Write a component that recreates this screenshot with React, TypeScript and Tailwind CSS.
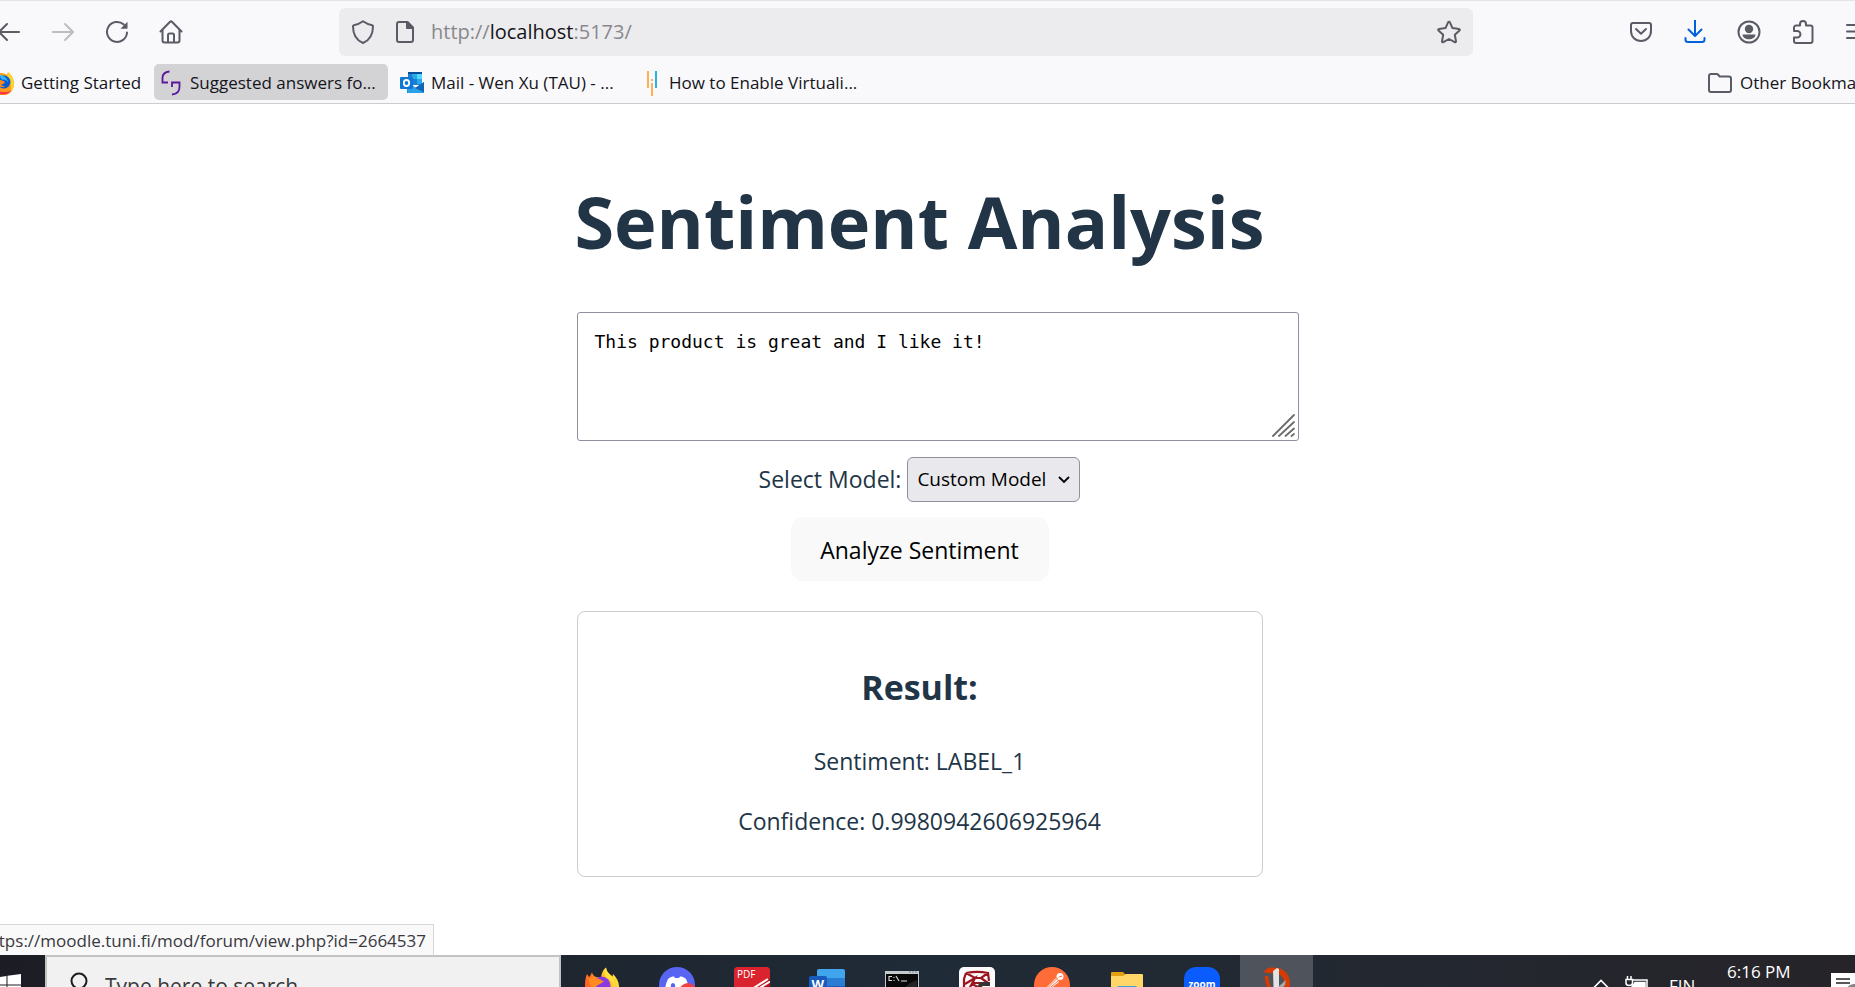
import { useState } from "react";

const UI = "font-['Open_Sans','Noto_Sans',sans-serif]";

function BackIcon() {
  return (
    <svg viewBox="0 0 24 24" className="h-6 w-6" fill="none" stroke="currentColor" strokeWidth="2" strokeLinecap="round" strokeLinejoin="round">
      <path d="M22 12H2M10 4l-8 8 8 8" />
    </svg>
  );
}

function ForwardIcon() {
  return (
    <svg viewBox="0 0 24 24" className="h-6 w-6" fill="none" stroke="currentColor" strokeWidth="2" strokeLinecap="round" strokeLinejoin="round">
      <path d="M2 12h20M14 4l8 8-8 8" />
    </svg>
  );
}

function ReloadIcon() {
  return (
    <svg viewBox="0 0 24 24" className="h-6 w-6" fill="none" stroke="currentColor" strokeWidth="2" strokeLinecap="round">
      <path d="M22 12.5A10 10 0 1 1 18.8 4.6" />
      <path d="M22.5 1.8v7h-7z" fill="currentColor" stroke="none" />
    </svg>
  );
}

function HomeIcon() {
  return (
    <svg viewBox="0 0 24 24" className="h-6 w-6" fill="none" stroke="currentColor" strokeWidth="2" strokeLinejoin="round" strokeLinecap="round">
      <path d="M1.5 11.5 10.8 2a1.7 1.7 0 0 1 2.4 0l9.3 9.5" />
      <path d="M3.5 10v10.5a2 2 0 0 0 2 2h13a2 2 0 0 0 2-2V10" />
      <path d="M9 22v-7a1.5 1.5 0 0 1 1.5-1.5h3A1.5 1.5 0 0 1 15 15v7" />
    </svg>
  );
}

function ShieldIcon() {
  return (
    <svg viewBox="0 0 24 26" className="h-[26px] w-6" fill="none" stroke="currentColor" strokeWidth="2" strokeLinejoin="round">
      <path d="M12 2.2c3.2 2.3 6 3.4 9.2 4 .6.1.8.4.8 1C22 15 19 21 12 24 5 21 2 15 2 7.2c0-.6.2-.9.8-1 3.2-.6 6-1.700 9.200-4z" />
    </svg>
  );
}

function PageIcon() {
  return (
    <svg viewBox="0 0 20 24" className="h-6 w-5" fill="none" stroke="currentColor" strokeWidth="2" strokeLinejoin="round">
      <path d="M12.5 2H4a2 2 0 0 0-2 2v16a2 2 0 0 0 2 2h12a2 2 0 0 0 2-2V7.5z" />
      <path d="M12 2v6h6z" fill="currentColor" />
    </svg>
  );
}

function StarIcon() {
  return (
    <svg viewBox="0 0 24 24" className="h-6 w-6" fill="none" stroke="currentColor" strokeWidth="2" strokeLinejoin="round">
      <path d="M11.2 2.2a.9.900 0 0 1 1.600 0l2.700 5.900 6.500.8c.8.100 1.100 1 .5 1.500l-4.700 4.400 1.200 6.500c.1.800-.6 1.300-1.300.9L12 19l-5.700 3.200c-.7.400-1.400-.1-1.300-.9l1.200-6.500L1.500 10.400C.9 9.900 1.200 9 2 8.900l6.500-.8z" />
    </svg>
  );
}

function PocketIcon() {
  return (
    <svg viewBox="0 0 24 24" className="h-6 w-6" fill="none" stroke="currentColor" strokeWidth="2" strokeLinejoin="round" strokeLinecap="round">
      <path d="M4 3h16a2 2 0 0 1 2 2v6c0 6-4.500 10-10 10S2 17 2 11V5a2 2 0 0 1 2-2z" />
      <path d="m7 9 5 4.800L17 9" />
    </svg>
  );
}

function DownloadIcon() {
  return (
    <svg viewBox="0 0 24 24" className="h-6 w-6" fill="none" stroke="currentColor" strokeWidth="2" strokeLinejoin="round" strokeLinecap="round">
      <path d="M12 0v15.500M5.500 9.500l6.500 6.500 6.500-6.500" />
      <path d="M2.500 18v1.500a2.500 2.500 0 0 0 2.500 2.500h14a2.500 2.500 0 0 0 2.500-2.500V18" />
    </svg>
  );
}

function AccountIcon() {
  return (
    <svg viewBox="0 0 24 24" className="h-6 w-6">
      <circle cx="12" cy="12" r="10.500" fill="none" stroke="currentColor" strokeWidth="2" />
      <circle cx="12" cy="9" r="4.200" fill="currentColor" />
      <path d="M5.500 14.500h13c0 3-3 4.800-6.500 4.800s-6.500-1.800-6.500-4.800z" fill="currentColor" />
    </svg>
  );
}

function PuzzleIcon() {
  return (
    <svg viewBox="0 0 24 26" className="h-[26px] w-6" fill="none" stroke="currentColor" strokeWidth="2" strokeLinejoin="round">
      <path d="M3 12V8.500a2 2 0 0 1 2-2h4V5a3 3 0 0 1 6 0v1.500h4.500a2 2 0 0 1 2 2V22a2 2 0 0 1-2 2H5a2 2 0 0 1-2-2v-3.500h3.200a3.200 3.200 0 0 0 0-6.500z" />
    </svg>
  );
}

function MenuIcon() {
  return (
    <svg viewBox="0 0 24 24" className="h-6 w-6" fill="none" stroke="currentColor" strokeWidth="2" strokeLinecap="round">
      <path d="M2 5h20M2 11.500h20M2 18h20" />
    </svg>
  );
}

function FirefoxLogo() {
  return (
    <svg viewBox="0 0 36 36" className="h-9 w-9">
      <defs>
        <linearGradient id="flame" x1="1" y1="0" x2="0" y2="0.600">
          <stop offset="0" stopColor="#fff44f" />
          <stop offset="0.400" stopColor="#ffc52f" />
          <stop offset="0.700" stopColor="#ff7a1f" />
          <stop offset="1" stopColor="#ff5a2c" />
        </linearGradient>
      </defs>
      <path d="M3 7c1 1.500 1.800 2.500 2.500 3L8 5.500c.6 2 2 3.500 4 4.500l5 .5c.5-4 2-8 5-10 .3 3 1.800 5 4 7l2.500 2 .5-2.500c3.500 3.500 6 8 6 12A17 17 0 0 1 1 19C1 14 1.500 10 3 7z" fill="url(#flame)" />
      <circle cx="17.500" cy="18.500" r="9" fill="#8a3be0" />
      <path d="M5 12c3-2 8-1.500 11 .5l4 2-5 3c-3 1.500-4 3-3 6-4-2-7-6-7-11.500z" fill="#ff8a1f" />
      <path d="M22 .5c.3 3 1.800 5 4 7 4 4 5 8 4 12-1-5-4-7-7-9s-3-7-1-10z" fill="#ffe23a" />
    </svg>
  );
}

function FirefoxBookmark() {
  return (
    <svg viewBox="0 0 24 24" className="h-6 w-6 shrink-0">
      <path d="M12 2c2 0 3 1 5 2l1-3c4 3 6 8 6 12a11.500 11.500 0 0 1-23 0C1 7 6 2 12 2z" fill="#ff9a1a" />
      <path d="M18 1c4 3 6 8 6 12 0 3-1 5-3 7 0-5 0-9-4-13z" fill="#ffd52b" />
      <path d="M1 14c0 6 5 9.500 11 9.500 4 0 7-1 9-4-6 3-14 2-20-5.500z" fill="#ff3647" />
      <circle cx="14" cy="11" r="6.500" fill="#0a5bd3" />
      <path d="M9 4c3 0 8 2 9 7-2-2-4-3-6-2z" fill="#32b8f5" />
      <path d="M6 10c3-2 7-1 9 1-1 2-3 2-4 3 1 1 3 1 4 1-2 2-7 2-9-5z" fill="#ff8a1a" />
    </svg>
  );
}

function ForumIcon() {
  return (
    <svg viewBox="0 0 22 26" className="h-[26px] w-[22px]" fill="none" stroke="#5b169c" strokeWidth="1.800">
      <path d="M9.500 1.500C5.500 1.800 2.500 4 2.500 8v4.500h5.500" />
      <path d="M12 17v-4.500h7.500V17c0 4-2.500 7-7.500 7.500" />
    </svg>
  );
}

function OutlookIcon() {
  return (
    <svg viewBox="0 0 24 24" className="h-6 w-6">
      <path d="M8 1h14v13H8z" fill="#1a7fd4" />
      <path d="M8 1h14v2H8z" fill="#0a4f9c" />
      <path d="M12 3h5v5h-5z" fill="#32a9e7" />
      <path d="M17 3h5v5h-5z" fill="#50d9ff" />
      <path d="M17 8h5v5h-5z" fill="#28a8ea" />
      <path d="M7 22V12l8.500 5L24 11v11z" fill="#1490df" />
      <path d="m7 11 17 11H8z" fill="#28a0ea" />
      <path d="m15 17 9-6v10z" fill="#1167b5" />
      <rect y="6" width="13" height="12" rx="1" fill="#0f78d4" />
      <ellipse cx="6.500" cy="12" rx="2.700" ry="3" fill="none" stroke="#fff" strokeWidth="1.800" />
    </svg>
  );
}

function ArticleIcon() {
  return (
    <svg viewBox="0 0 10 26" className="h-[26px] w-[10px]">
      <path d="M0 1h2v17H0z" fill="#fbb254" />
      <path d="M8 1h2v17H8z" fill="#28b3e6" />
      <path d="M4 9h2v2H4zM4 13h2v13H4z" fill="#fbb254" />
    </svg>
  );
}

function FolderOutline() {
  return (
    <svg viewBox="0 0 24 22" className="h-[22px] w-6" fill="none" stroke="currentColor" strokeWidth="2" strokeLinejoin="round">
      <path d="M3 2h5.500c1 0 1.300.3 1.900 1l1.300 1.500H21a2 2 0 0 1 2 2V18a2 2 0 0 1-2 2H3a2 2 0 0 1-2-2V4a2 2 0 0 1 2-2z" />
    </svg>
  );
}

function BrowserToolbar() {
  return (
    <div className="flex h-[62px] items-center overflow-hidden border-t border-[#e4e4e8] text-[#5b5b66]">
      <nav className="flex w-[339px] shrink-0 items-center gap-[30px]">
        <button aria-label="Back" className="-ml-[3px] flex w-6"><BackIcon /></button>
        <button aria-label="Forward" disabled className="flex text-[#bcbcc2]"><ForwardIcon /></button>
        <button aria-label="Reload" className="flex"><ReloadIcon /></button>
        <button aria-label="Home" className="flex"><HomeIcon /></button>
      </nav>
      <div className="flex h-12 flex-1 items-center rounded-[6px] bg-[#ececee] px-3">
        <ShieldIcon />
        <span className="ml-5"><PageIcon /></span>
        <a href="#" className="ml-4 flex-1 text-xl text-[#88888c]">
          http://<span className="text-[#15141a]">localhost</span>:5173/
        </a>
        <button aria-label="Bookmark this page"><StarIcon /></button>
      </div>
      <div className="flex w-[382px] shrink-0 items-center gap-[30px] pl-[156px]">
        <button aria-label="Save to Pocket"><PocketIcon /></button>
        <button aria-label="Downloads" className="text-[#0061e0]"><DownloadIcon /></button>
        <button aria-label="Account"><AccountIcon /></button>
        <button aria-label="Extensions"><PuzzleIcon /></button>
        <button aria-label="Menu" className="shrink-0"><MenuIcon /></button>
      </div>
    </div>
  );
}

function BookmarksBar() {
  const item = "flex h-9 shrink-0 items-center gap-2 whitespace-nowrap rounded-[5px] pt-px text-[#15141a]";
  return (
    <div className="flex h-[42px] items-start overflow-hidden border-b border-[#cccccf] pt-0.5 text-[17px]">
      <a href="#" className={`${item} -ml-2.5 w-[164px] gap-[7px]`}>
        <FirefoxBookmark />
        Getting Started
      </a>
      <a href="#" className={`${item} w-[234px] bg-[#d3d3d6] pl-1.5`}>
        <ForumIcon />
        Suggested answers fo...
      </a>
      <a href="#" className={`${item} w-[247px] gap-[7px] pl-3`}>
        <OutlookIcon />
        Mail - Wen Xu (TAU) - ...
      </a>
      <a href="#" className={`${item} gap-3 pl-3`}>
        <ArticleIcon />
        How to Enable Virtuali...
      </a>
      <div className="flex-1" />
      <a href="#" className={`${item} w-[147px] gap-1`}>
        <span className="shrink-0 text-[#5b5b66]"><FolderOutline /></span>
        Other Bookmarks
      </a>
    </div>
  );
}

function SentimentPage() {
  const [text, setText] = useState("This product is great and I like it!");
  const [model, setModel] = useState("Custom Model");
  return (
    <main className="relative flex min-h-0 flex-1 justify-center overflow-hidden bg-white pr-4 pt-[73px] text-[#213547]">
      <div className="flex w-[686px] flex-col items-center">
        <h1 className="text-[72px] leading-[88px] font-bold whitespace-nowrap">Sentiment Analysis</h1>
        <div className="relative mt-[47px] w-full">
          <textarea
            aria-label="Text to analyze"
            value={text}
            onChange={(e) => setText(e.target.value)}
            className="box-content block h-[93px] w-full resize-none rounded-[3px] border border-[#8f8f9d] bg-white p-[17px] font-['DejaVu_Sans_Mono','Liberation_Mono',monospace] text-[18px] leading-6 text-black outline-none"
          />
          <svg viewBox="0 0 24 24" className="absolute -right-8 bottom-1 h-6 w-6" stroke="#6c6c6c" strokeWidth="1.800" strokeLinecap="round">
            <path d="M2 23 23 2M8 23 23 9M14.500 23 23 15.500M20.500 23 23 21" />
          </svg>
        </div>
        <div className="mt-4 flex h-[45px] items-center gap-1.5 text-[23px]">
          <label htmlFor="model">Select Model:</label>
          <div className="relative h-full w-[173px]">
            <select
              id="model"
              value={model}
              onChange={(e) => setModel(e.target.value)}
              className="h-full w-full appearance-none rounded-[6px] border border-[#8f8f9d] bg-[#e9e9ed] pl-[9px] text-[19px] text-black outline-none"
            >
              <option>Custom Model</option>
            </select>
            <svg viewBox="0 0 12 8" className="pointer-events-none absolute top-[19px] right-2.5 h-2 w-3" fill="none" stroke="#000" strokeWidth="1.800">
              <path d="m1 1 5 5 5-5" />
            </svg>
          </div>
        </div>
        <button className="mt-[15px] h-16 w-[258px] rounded-[12px] bg-[#f9f9f9] pt-0.5 text-[23px] text-black">Analyze Sentiment</button>
        <section className="mt-[30px] flex h-[266px] w-full flex-col items-center rounded-lg border border-[#cccccc] pt-12 text-[23px]">
          <h2 className="text-[34px] leading-[54px] font-bold">Result:</h2>
          <p className="mt-[29px] leading-9">Sentiment: LABEL_1</p>
          <p className="mt-6 leading-9">Confidence: 0.9980942606925964</p>
        </section>
      </div>
      <div className="absolute bottom-0 left-0 flex h-[31px] w-[434px] items-center justify-end overflow-hidden border-t border-r border-[#d7d7db] bg-[#f9f9fa] pt-0.5 pr-[7px] text-[17px] whitespace-nowrap text-[#38383d]">
        https://moodle.tuni.fi/mod/forum/view.php?id=2664537
      </div>
    </main>
  );
}

function DiscordIcon() {
  return (
    <svg viewBox="0 0 36 36" className="h-9 w-9">
      <circle cx="18" cy="18" r="18" fill="#5865f2" />
      <path d="M9 12c3-2.500 5-2.500 6-2.500l1 1.500h4l1-1.500c1 0 3 0 6 2.500 2 4 3 8 3 12l-6 4-2-3h-8l-2 3-6-4c0-4 1-8 3-12z" fill="#fff" />
      <ellipse cx="14" cy="18.500" rx="2.200" ry="2.600" fill="#5865f2" />
      <circle cx="29" cy="25" r="9" fill="#ed4245" />
    </svg>
  );
}

function PdfIcon() {
  return (
    <svg viewBox="0 0 36 36" className="h-9 w-9">
      <rect width="36" height="36" rx="4" fill="#b5121b" />
      <path d="M4 0h28a4 4 0 0 1 4 4v7L0 30V4a4 4 0 0 1 4-4z" fill="#d9232e" />
      <path d="M18 22 34 12M24 22l12-7.500" stroke="#fff" strokeWidth="2" />
      <text x="3" y="11" fontSize="10" fill="#fff" fontFamily="Open Sans, sans-serif">PDF</text>
    </svg>
  );
}

function WordIcon() {
  return (
    <svg viewBox="0 0 36 36" className="h-9 w-9">
      <path d="M10 2h24a2 2 0 0 1 2 2v7H8V4a2 2 0 0 1 2-2z" fill="#41a5ee" />
      <path d="M8 11h28v8H8z" fill="#2b7cd3" />
      <path d="M8 19h28v13H8z" fill="#185abd" />
      <rect y="9" width="18" height="18" rx="2" fill="#185abd" />
      <text x="2.500" y="21.500" fontSize="13" fontWeight="700" fill="#fff" fontFamily="Open Sans, sans-serif">W</text>
    </svg>
  );
}

function TerminalIcon() {
  return (
    <svg viewBox="0 0 36 36" className="h-9 w-9">
      <rect x="1" y="4" width="34" height="30" fill="#c4c9cc" />
      <rect x="2" y="7" width="32" height="27" fill="#080808" />
      <path d="M14 34C18 22 22 17 33 13v21z" fill="#242424" />
      <path d="M25 5h2M28 5h2M31 5h2" stroke="#6d8ba5" />
      <path d="M8 9.500H5v4h3M10 10v1M10 13v1M12 9l3 5M17 14h6" fill="none" stroke="#ddd" strokeWidth="1.100" />
    </svg>
  );
}

function MazeIcon() {
  return (
    <svg viewBox="0 0 36 36" className="h-9 w-9">
      <rect width="36" height="36" rx="5" fill="#fafafa" />
      <path d="M7 6c8-1.500 15-1.500 22 0l1 8M7 6 5 12v20M7 6l9 5 6 0 7-5M6 17l10-6-7 13M16 11l-3 6 6 3M22 11l7 5M14 16h10" fill="none" stroke="#9c1620" strokeWidth="2.200" />
      <path d="M21 24v-4c0-2 1-3 3-3h7" fill="none" stroke="#333" strokeWidth="4" />
    </svg>
  );
}

function PostmanIcon() {
  return (
    <svg viewBox="0 0 36 36" className="h-9 w-9">
      <circle cx="18" cy="18" r="18" fill="#ff6c37" />
      <circle cx="26" cy="9.500" r="3.500" fill="#fff" />
      <path d="m13 20 9-9 3 4-9 7z" fill="#fff" />
      <path d="M24 10.500 14 20.500M25 13l-9 8" stroke="#ff6c37" strokeWidth="1" />
      <path d="m25 10 3-1" stroke="#ff6c37" />
    </svg>
  );
}

function ExplorerIcon() {
  return (
    <svg viewBox="0 0 36 36" className="h-9 w-9">
      <path d="M2 6a1 1 0 0 1 1-1h11l3 3h4v6H2z" fill="#e0a010" />
      <path d="M2 9h12l3-2h16a1 1 0 0 1 1 1v24H2z" fill="#ffd667" />
      <path d="M8 32V21a2 2 0 0 1 2-2h16a2 2 0 0 1 2 2v11z" fill="#3d9fd8" />
    </svg>
  );
}

function ZoomIcon() {
  return (
    <svg viewBox="0 0 36 36" className="h-9 w-9">
      <rect width="36" height="36" rx="12" fill="#0b5cff" />
      <text x="18" y="20.500" textAnchor="middle" fontSize="10" fontWeight="700" fill="#fff" fontFamily="Open Sans, sans-serif">zoom</text>
    </svg>
  );
}

function SnipIcon() {
  return (
    <svg viewBox="0 0 36 36" className="h-9 w-9">
      <path d="M5 5C7 0 14 0 18 1c9 1 14 9 13 19h-6c1-8-2-12-7-13C13 6 9 7 5 5z" fill="#d83b01" />
      <path d="M7.500 9c0 4 1 8 3 12" fill="none" stroke="#d83b01" strokeWidth="3.500" />
      <path d="m14 4 4-3 2 1v34h-5z" fill="#e4e4e4" />
      <path d="m19 20 8-7-1 5-7 8z" fill="#a9a9a9" />
    </svg>
  );
}

const apps = [
  { name: "Firefox", icon: <FirefoxLogo /> },
  { name: "Discord", icon: <DiscordIcon /> },
  { name: "PDF reader", icon: <PdfIcon /> },
  { name: "Word", icon: <WordIcon /> },
  { name: "Command Prompt", icon: <TerminalIcon /> },
  { name: "Maze", icon: <MazeIcon /> },
  { name: "Postman", icon: <PostmanIcon /> },
  { name: "File Explorer", icon: <ExplorerIcon /> },
  { name: "Zoom", icon: <ZoomIcon /> },
  { name: "Snipping Tool", icon: <SnipIcon />, active: true },
];

function Taskbar() {
  return (
    <footer className="h-8 shrink-0 overflow-hidden bg-linear-to-r from-[#1c1d24] via-[#1f2b37] to-[#262429]">
      <div className="flex h-[60px] items-stretch">
        <button aria-label="Start" className="flex w-[45px] shrink-0 items-center overflow-hidden">
          <svg viewBox="0 0 24 24" className="-ml-[3px] h-6 w-6 shrink-0" fill="#fff">
            <path d="M0 4.500 9.500 3v8.500H0zM10.500 2.800 24 1v10.500H10.500zM0 12.500h9.500V21L0 19.500zM10.500 12.500H24V23l-13.500-1.800z" />
          </svg>
        </button>
        <label className="flex w-[516px] shrink-0 items-center gap-3.5 border-2 border-[#c3c3c3] bg-[#f1f1f1] pl-[22px]">
          <svg viewBox="0 0 22 26" className="h-[26px] w-[22px] shrink-0" fill="none" stroke="#1c1c1c" strokeWidth="2">
            <circle cx="10" cy="9" r="7.500" />
            <path d="m5 15-5 8" />
          </svg>
          <input
            aria-label="Search"
            placeholder="Type here to search"
            className="h-9 w-full bg-transparent pt-0.5 text-[21px] placeholder-[#3a3a3a] outline-none"
          />
        </label>
        <div className="ml-[3px] flex">
          {apps.map((app) => (
            <button
              key={app.name}
              aria-label={app.name}
              className={`flex w-[75px] items-start justify-center pt-3 ${app.active ? "border-x border-transparent bg-[#4f535b] bg-clip-padding" : ""}`}
            >
              {app.icon}
            </button>
          ))}
        </div>
        <div className="ml-auto flex items-start text-white">
          <button aria-label="Show hidden icons" className="pt-6">
            <svg viewBox="0 0 16 10" className="h-[10px] w-4" fill="none" stroke="#fff" strokeWidth="1.600">
              <path d="m1 8.500 7-7 7 7" />
            </svg>
          </button>
          <svg viewBox="0 0 24 24" className="mt-[21px] ml-4 h-6 w-6" fill="none" stroke="#fff" strokeWidth="1.500">
            <path d="M2.500 0v3M6 0v3M1 3.500h6.500V7c0 1.500-1.500 2.500-3.300 2.500S1 8.500 1 7z" />
            <path d="M8 4h14v16H5" />
            <path d="M10 6.500h10V18H7v-7z" fill="#fff" />
          </svg>
          <span className="mt-[18px] ml-5 w-[58px] text-[17px]">FIN</span>
          <time className="mt-[5px] w-[104px] text-[17px] leading-6">6:16 PM</time>
          <svg viewBox="0 0 24 24" className="mt-[18px] h-6 w-6">
            <path d="M0 0h24v24H0z" fill="#fff" />
            <path d="M5 6h14M5 10h14" stroke="#222" strokeWidth="1.500" />
            <circle cx="23" cy="20" r="9" fill="#858585" />
          </svg>
        </div>
      </div>
    </footer>
  );
}

export default function App() {
  return (
    <div className={`flex h-screen flex-col overflow-hidden ${UI}`}>
      <header className="shrink-0 bg-[#f9f9fb]">
        <BrowserToolbar />
        <BookmarksBar />
      </header>
      <SentimentPage />
      <Taskbar />
    </div>
  );
}
